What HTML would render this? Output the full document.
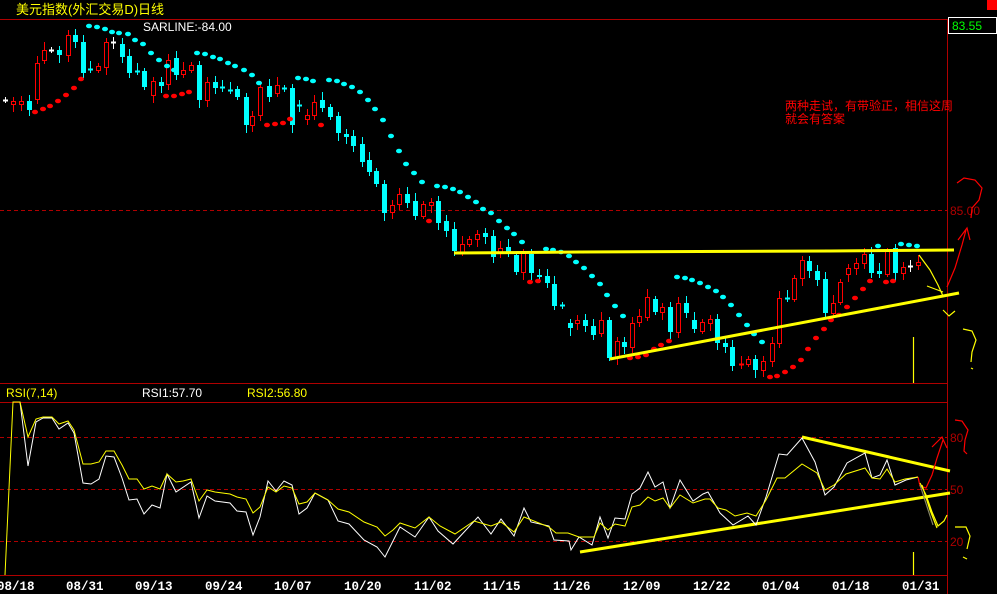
<!DOCTYPE html>
<html><head><meta charset="utf-8">
<style>
html,body{margin:0;padding:0;background:#000;width:997px;height:594px;overflow:hidden}
svg{display:block}
text{font-family:"Liberation Sans","Noto Sans CJK SC",sans-serif}
.d{font-family:"Liberation Mono",monospace;font-weight:bold;font-size:12.5px;fill:#fff}
</style></head><body>
<svg id="s" width="997" height="594" viewBox="0 0 997 594" xmlns="http://www.w3.org/2000/svg">
<rect width="997" height="594" fill="#000"/>
<!-- frame -->
<line x1="0" y1="19.5" x2="997" y2="19.5" stroke="#b00000"/>
<line x1="947.5" y1="19" x2="947.5" y2="594" stroke="#b00000"/>
<line x1="0" y1="383.5" x2="948" y2="383.5" stroke="#b00000"/>
<line x1="0" y1="402.5" x2="948" y2="402.5" stroke="#b00000"/>
<line x1="0" y1="575.5" x2="948" y2="575.5" stroke="#b00000"/>
<g stroke="#b00000" stroke-dasharray="4 3">
<line x1="0" y1="210.5" x2="947" y2="210.5"/>
<line x1="0" y1="437.5" x2="947" y2="437.5"/>
<line x1="0" y1="489.5" x2="947" y2="489.5"/>
<line x1="0" y1="541.5" x2="947" y2="541.5"/>
</g>
<rect x="987" y="0" width="10" height="10" fill="#f00"/>
<rect x="948.5" y="17.5" width="48" height="16" fill="#000" stroke="#fff"/>
<text x="952" y="30" font-size="12" fill="#0f0">83.55</text>
<text x="950" y="215" font-size="12" fill="#b00000">85.00</text>
<text x="950" y="442" font-size="12" fill="#b00000">80</text>
<text x="950" y="494" font-size="12" fill="#b00000">50</text>
<text x="950" y="546" font-size="12" fill="#b00000">20</text>

<text x="16" y="14" font-size="13" fill="#ff0">美元指数(外汇交易D)日线</text>
<text x="143" y="31" font-size="12" fill="#fff">SARLINE:-84.00</text>
<text x="6" y="397" font-size="12" fill="#ff0">RSI(7,14)</text>
<text x="142" y="397" font-size="12" fill="#fff">RSI1:57.70</text>
<text x="247" y="397" font-size="12" fill="#ff0">RSI2:56.80</text>
<text x="785" y="110" font-size="12" fill="#f00">两种走试，有带验正，相信这周</text>
<text x="785" y="123" font-size="12" fill="#f00">就会有答案</text>

<g id="c"></g>

<!-- main yellow lines -->
<g stroke="#ff0" stroke-width="3" fill="none">
<polyline points="454,253 580,252 830,251 954,250"/>
<line x1="610" y1="359" x2="959" y2="293"/>
<line x1="580" y1="552" x2="950" y2="493"/>
<line x1="802" y1="437" x2="950" y2="471"/>
</g>
<!-- annotations -->
<g fill="none" stroke-width="1.2">
<path d="M919,255 L930,270 L938,285 L943,296 M927,286 L943,292 M943,310 L949,316 L955,311" stroke="#ff0"/>
<path d="M947,287 L955,268 L962,245 L966,230 M958,240 L967,228 L970,240 M957,183 L964,178 L975,180 L982,188 L979,200 L972,208 L971,218" stroke="#f00"/>
<path d="M963,329 L972,331 L976,340 L972,352 L971,362 M971,368 L973,369" stroke="#ff0"/>
<line x1="913.5" y1="337" x2="913.5" y2="383" stroke="#ff0"/>
<line x1="913.5" y1="552" x2="913.5" y2="575" stroke="#ff0"/>
<path d="M918,477 L920,486 L926,488 L932,475 L937,458 L943,440 M932,447 L942,437 L947,448 M955,420 L962,421 L968,430 L965,440 L964,451 L967,454" stroke="#f00"/>
<path d="M920,483 L926,495 L932,512 L938,526 L944,521 L947,515 M922,485 L930,510 L937,528 M955,527 L966,527 L970,536 L967,549 M963,557 L967,559" stroke="#ff0"/>
<path d="M920,485 L933,525" stroke="#886"/>
</g>
<!-- RSI lines -->
<polyline fill="none" stroke="#fff" stroke-width="1" points="13,402 20,402 28,466 36,422 43,418 52,418 59,429 68,423 74,433 83,483 91,484 99,479 106,456 114,457 122,478 129,500 137,499 144,514 152,505 160,508 167,474 176,492 191,482 199,518 207,496 215,501 230,503 237,511 246,512 253,535 260,517 268,481 276,491 284,481 292,485 299,514 307,508 315,493 328,500 338,521 349,524 364,540 377,547 385,557 400,527 415,537 429,517 438,531 453,544 478,517 491,534 501,519 514,536 524,508 531,522 549,526 554,540 569,541 571,550 579,537 592,545 600,517 608,538 615,518 625,519 632,494 640,488 648,472 655,487 663,482 670,508 680,480 693,501 703,494 708,492 720,513 733,525 748,516 756,525 766,497 779,454 787,455 802,438 815,462 825,495 834,487 847,463 865,453 872,478 880,475 887,460 895,485 906,480 918,477"/>
<polyline fill="none" stroke="#ff0" stroke-width="1" points="5,575 13,402 20,402 28,437 36,419 43,417 52,417 59,424 68,421 74,430 83,464 91,464 99,462 106,451 114,451 122,465 129,479 137,479 144,489 152,486 160,489 167,474 176,482 183,481 191,479 199,501 207,490 215,492 230,494 237,497 246,499 253,513 260,507 268,487 276,492 284,486 292,488 299,504 307,502 315,493 328,500 338,509 349,512 364,522 377,527 385,536 393,530 400,523 415,528 429,517 440,526 455,534 474,521 491,526 501,522 514,532 524,517 549,527 556,533 568,533 579,537 594,537 600,523 608,530 615,524 625,526 632,507 640,505 648,497 655,501 663,498 670,508 680,495 693,503 705,499 710,499 718,508 726,510 735,516 747,513 756,516 766,500 777,478 785,478 802,464 817,473 825,490 834,485 846,474 865,468 872,478 880,479 887,469 895,482 905,479 918,477"/>

<text class="d" x="-3" y="590">08/18</text>
<text class="d" x="66" y="590">08/31</text>
<text class="d" x="135" y="590">09/13</text>
<text class="d" x="205" y="590">09/24</text>
<text class="d" x="274" y="590">10/07</text>
<text class="d" x="344" y="590">10/20</text>
<text class="d" x="414" y="590">11/02</text>
<text class="d" x="483" y="590">11/15</text>
<text class="d" x="553" y="590">11/26</text>
<text class="d" x="623" y="590">12/09</text>
<text class="d" x="693" y="590">12/22</text>
<text class="d" x="762" y="590">01/04</text>
<text class="d" x="832" y="590">01/18</text>
<text class="d" x="902" y="590">01/31</text>
</svg>
<script>
var C=[[5,100,100,'w'],[13,101,104,'r'],[21,101,104,'r'],[29,101,110,'c'],[37,63,99,'r'],[44,50,60,'r'],[51,50,50,'w'],[59,50,55,'c'],[68,35,55,'r'],[75,35,42,'c'],[83,42,73,'c'],[90,69,69,'c'],[98,66,70,'r'],[106,42,67,'r'],[113,42,42,'w'],[122,44,57,'c'],[129,56,73,'c'],[137,71,71,'c'],[144,71,87,'c'],[153,81,95,'r'],[161,82,86,'c'],[168,60,84,'r'],[176,58,75,'c'],[183,70,74,'r'],[191,65,70,'r'],[199,65,100,'c'],[207,82,100,'r'],[215,82,88,'c'],[222,87,87,'c'],[230,90,90,'c'],[237,89,97,'c'],[246,97,125,'c'],[252,116,125,'r'],[260,87,115,'r'],[269,86,97,'c'],[277,85,93,'r'],[284,88,89,'c'],[292,88,125,'c'],[299,105,105,'c'],[307,115,119,'r'],[314,102,115,'r'],[322,100,108,'c'],[330,107,117,'c'],[338,116,133,'c'],[346,134,137,'c'],[353,136,146,'c'],[362,144,162,'c'],[369,160,172,'c'],[376,171,184,'c'],[384,184,213,'c'],[392,205,212,'r'],[399,194,204,'r'],[407,194,203,'c'],[415,201,216,'c'],[423,204,216,'r'],[431,202,205,'r'],[438,201,223,'c'],[446,221,231,'c'],[454,229,251,'c'],[462,244,252,'r'],[469,239,244,'r'],[477,234,239,'r'],[485,233,237,'c'],[493,236,257,'c'],[500,248,253,'r'],[508,247,253,'c'],[516,255,272,'c'],[523,253,272,'r'],[531,254,273,'c'],[539,275,277,'c'],[547,276,283,'c'],[554,284,306,'c'],[562,305,306,'c'],[570,323,328,'c'],[577,320,323,'r'],[585,320,326,'c'],[593,326,335,'c'],[601,320,333,'r'],[609,320,358,'c'],[617,341,357,'r'],[624,342,347,'c'],[632,323,347,'r'],[639,316,322,'r'],[647,297,317,'r'],[655,299,312,'c'],[662,307,312,'r'],[670,307,332,'c'],[678,303,332,'r'],[686,303,313,'c'],[694,320,329,'c'],[702,322,331,'r'],[710,319,323,'r'],[717,319,343,'c'],[725,343,347,'c'],[732,347,366,'c'],[741,364,365,'r'],[748,359,364,'r'],[755,359,370,'c'],[763,361,370,'r'],[772,343,361,'r'],[779,298,343,'r'],[787,298,298,'c'],[794,278,299,'r'],[802,260,278,'r'],[809,261,271,'c'],[817,271,280,'c'],[825,279,313,'c'],[833,303,313,'r'],[840,282,302,'r'],[848,268,274,'r'],[856,263,268,'r'],[864,254,263,'r'],[871,254,273,'c'],[879,271,274,'c'],[887,251,274,'r'],[895,248,273,'c'],[903,267,273,'r'],[910,266,266,'w'],[918,262,265,'r']];
var RD=[[35,112],[43,109],[50,106],[58,101],[66,95],[74,88],[81,79],[166,96],[174,96],[182,94],[189,92],[267,125],[275,124],[283,123],[290,119],[321,125],[429,221],[530,282],[538,281],[630,358],[638,357],[646,355],[654,349],[661,345],[669,341],[770,377],[777,376],[785,372],[793,367],[801,360],[808,349],[816,338],[824,329],[831,320],[839,315],[847,307],[855,298],[863,289],[870,281],[886,282],[893,281]];
var CD=[[89,26],[97,27],[105,29],[112,32],[119,33],[128,34],[135,40],[143,44],[151,53],[159,60],[167,66],[174,70],[197,53],[205,54],[213,57],[220,59],[228,63],[235,66],[244,70],[252,75],[259,83],[298,78],[306,79],[313,81],[329,80],[337,81],[344,84],[352,87],[360,92],[368,100],[375,109],[383,120],[391,136],[399,151],[406,164],[414,173],[422,182],[437,186],[445,187],[453,189],[460,192],[468,197],[476,202],[483,209],[491,213],[499,221],[507,228],[514,234],[522,242],[546,249],[553,250],[561,252],[569,256],[576,262],[584,268],[592,276],[600,284],[607,295],[615,306],[623,316],[677,277],[685,278],[692,280],[700,283],[708,287],[716,291],[723,297],[731,305],[739,315],[747,325],[754,334],[762,342],[878,246],[901,244],[909,245],[917,246]];
var h='';
C.forEach(function(c,i){var x=c[0],t=c[1],b=c[2],k=c[3];var col=k=='r'?'#f00':(k=='c'?'#0ff':'#fff');
var wt=t-3-(i*7%6),wb=b+3+(i*5%6);
h+='<line x1="'+(x+.5)+'" y1="'+wt+'" x2="'+(x+.5)+'" y2="'+wb+'" stroke="'+col+'"/>';
if(b-t<2){h+='<line x1="'+(x-2)+'" y1="'+(t+.5)+'" x2="'+(x+3)+'" y2="'+(t+.5)+'" stroke="'+col+'" stroke-width="2"/>';}
else if(k=='r'){h+='<rect x="'+(x-1.5)+'" y="'+(t+.5)+'" width="4" height="'+(b-t)+'" fill="#000" stroke="#f00"/>';}
else{h+='<rect x="'+(x-2)+'" y="'+t+'" width="5" height="'+(b-t)+'" fill="'+col+'"/>';}});
RD.forEach(function(d){h+='<ellipse cx="'+d[0]+'" cy="'+d[1]+'" rx="3" ry="2.3" fill="#f00"/>';});
CD.forEach(function(d){h+='<ellipse cx="'+d[0]+'" cy="'+d[1]+'" rx="3" ry="2.3" fill="#0ff"/>';});
document.getElementById('c').innerHTML=h;
</script>
</body></html>
